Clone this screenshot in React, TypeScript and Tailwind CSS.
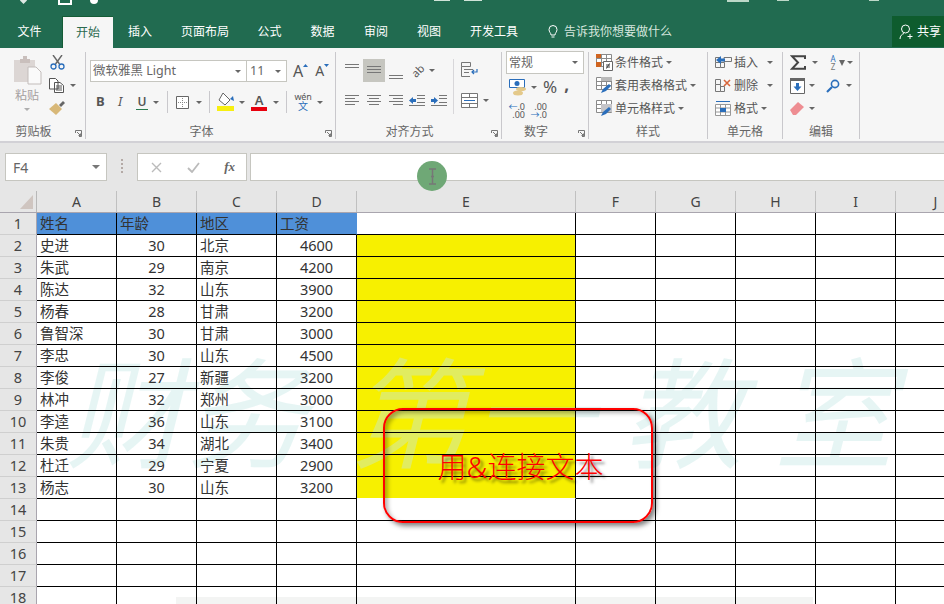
import { ReactNode } from "react";

const rows = [
  ["史进", "30", "北京", "4600"],
  ["朱武", "29", "南京", "4200"],
  ["陈达", "32", "山东", "3900"],
  ["杨春", "28", "甘肃", "3200"],
  ["鲁智深", "30", "甘肃", "3000"],
  ["李忠", "30", "山东", "4500"],
  ["李俊", "27", "新疆", "3200"],
  ["林冲", "32", "郑州", "3000"],
  ["李逵", "36", "山东", "3100"],
  ["朱贵", "34", "湖北", "3400"],
  ["杜迁", "29", "宁夏", "2900"],
  ["杨志", "30", "山东", "3200"],
];

const tabs = [
  { label: "插入", w: "w-[54px]" },
  { label: "页面布局", w: "w-[76px]" },
  { label: "公式", w: "w-[53px]" },
  { label: "数据", w: "w-[53px]" },
  { label: "审阅", w: "w-[54px]" },
  { label: "视图", w: "w-[52px]" },
  { label: "开发工具", w: "w-[78px]" },
];

const columns = [
  { label: "A", w: "w-[80px]" },
  { label: "B", w: "w-[80px]" },
  { label: "C", w: "w-[80px]" },
  { label: "D", w: "w-[80px]" },
  { label: "E", w: "w-[219px]" },
  { label: "F", w: "w-[80px]" },
  { label: "G", w: "w-[80px]" },
  { label: "H", w: "w-[80px]" },
  { label: "I", w: "w-[80px]" },
  { label: "J", w: "w-[80px]" },
];

const watermark = [
  { ch: "财", ml: "ml-0" },
  { ch: "务", ml: "ml-[0px]" },
  { ch: "第", ml: "ml-[43px]" },
  { ch: "一", ml: "ml-[4px]" },
  { ch: "教", ml: "ml-[30px]" },
  { ch: "室", ml: "ml-[31px]" },
];

const sheetCols = "grid-cols-[37px_80px_80px_80px_80px_219px_80px_80px_80px_80px_80px]";

function Caret({ className = "" }: { className?: string }) {
  return <span className={`inline-block h-0 w-0 border-x-[3px] border-t-[3px] border-x-transparent border-t-[#666] ${className}`} />;
}

function Launcher() {
  return (
    <svg width="7" height="7" viewBox="0 0 7 7" className="shrink-0">
      <path d="M.5 3V.5H6.5V6.5H4M2 2L5.5 5.5M5.5 3.5V5.5H3.5" fill="none" stroke="#777" />
    </svg>
  );
}

function Group({ w, label, launcher, children }: { w: string; label: string; launcher?: boolean; children: ReactNode }) {
  return (
    <div className={`relative my-1 flex h-[87px] flex-col border-r border-[#c9c8cc] ${w}`}>
      <div className="h-[72px]">{children}</div>
      <div className={`text-center text-[12px] leading-[15px] text-[#666] ${launcher ? "pr-[18px]" : ""}`}>{label}</div>
      {launcher && (
        <div className="absolute right-[3px] bottom-[2px] flex">
          <Launcher />
        </div>
      )}
    </div>
  );
}

function Lines({ d }: { d: string }) {
  return (
    <svg width="16" height="16" viewBox="0 0 16 16">
      <path d={d} fill="none" stroke="#777" />
    </svg>
  );
}

function CellIcon({ kind }: { kind: "cond" | "table" | "style" }) {
  return (
    <svg width="17" height="17" viewBox="0 0 17 17">
      <path d="M.5.5H15.5V12.5H.5ZM.5 4.5H15.5M.5 8.5H15.5M5.5.5V12.5M10.5.5V12.5" fill="#fff" stroke="#8a8a8a" />
      {kind === "cond" && <path d="M0 0H5V4H0Z M0 8H5V13H0Z" fill="#d0641f" />}
      {kind === "cond" && <path d="M7.5 7.5H16.5V16.5H7.5Z" fill="#fff" stroke="#666" />}
      {kind === "cond" && <path d="M10 11H14M10 13H14M13.5 9.5L10.5 14.5" stroke="#444" fill="none" />}
      {kind === "table" && <path d="M5 0H16V4H5Z" fill="#b9b9b9" />}
      {kind === "style" && <path d="M5 4H16V12H5Z" fill="#c4c4c8" />}
      {kind !== "cond" && <path d="M5 16L7 12L13 7L15 9L10 14Z" fill="#2a6ebb" />}
    </svg>
  );
}

function StyleRow({ kind, label }: { kind: "cond" | "table" | "style"; label: string }) {
  return (
    <div className="flex h-[23px] items-center">
      <CellIcon kind={kind} />
      <span className="ml-[2px] text-[12px] text-[#555]">{label}</span>
      <Caret className="ml-[3px]" />
    </div>
  );
}

function CellsRow({ icon, label, caret }: { icon: ReactNode; label: string; caret: string }) {
  return (
    <div className="flex h-[23px] items-center">
      {icon}
      <span className="ml-[2px] text-[12px] text-[#555]">{label}</span>
      <Caret className={caret} />
    </div>
  );
}

function Ribbon() {
  return (
    <div className="flex h-[95px] border-b-2 border-[#d2d1d6] bg-[#f6f6f6]">
      <Group w="w-[86px]" label="剪贴板" launcher>
        <div className="flex pt-[3px] pl-[13px]">
          <div className="flex w-[28px] flex-col items-center">
            <svg width="29" height="30" viewBox="0 0 29 30">
              <path d="M1 5H22V27H1Z" fill="#dcd6d4" />
              <path d="M7 4H10V1H14V4H17V8H7Z" fill="#c9bfbc" />
              <path d="M15 12H23L28 17V29H15Z" fill="#fafafa" stroke="#c2bcba" />
            </svg>
            <span className="mt-[3px] text-[12px] leading-[15px] text-[#a5a0a0]">粘贴</span>
            <Caret className="mt-[5px] opacity-50" />
          </div>
          <div className="ml-2 flex flex-col gap-[8px]">
            <svg width="15" height="15" viewBox="0 0 15 15" className="ml-[1px]">
              <path d="M3 0L9.5 9M12 0L5.5 9" fill="none" stroke="#666" strokeWidth="1.4" />
              <circle cx="3.5" cy="11.5" r="2.5" fill="none" stroke="#2a6ebb" strokeWidth="1.3" />
              <circle cx="11.5" cy="11.5" r="2.5" fill="none" stroke="#2a6ebb" strokeWidth="1.3" />
            </svg>
            <div className="flex items-center">
              <svg width="15" height="15" viewBox="0 0 15 15">
                <path d="M.5.5H6.5L9 3V11H.5ZM5.5 4.5H11L14.5 7.5V14.5H5.5ZM7 8H13M7 10H13M7 12H13" fill="#fff" stroke="#555" />
              </svg>
              <Caret className="ml-[6px]" />
            </div>
            <svg width="16" height="14" viewBox="0 0 16 14">
              <path d="M10 4L14 0L16 2L12 6Z" fill="#666" />
              <path d="M0 8L7 2L13 8L7 14Z" fill="#d8b878" />
            </svg>
          </div>
        </div>
      </Group>

      <Group w="w-[250px]" label="字体" launcher>
        <div className="mt-2 flex h-[22px] items-center pl-1">
          <div className="flex h-[22px] w-[157px] items-center justify-between border border-[#c6c6c0] bg-white pr-[5px] pl-[2px]">
            <span className="text-[12.5px] text-[#666]">微软雅黑 Light</span>
            <Caret />
          </div>
          <div className="flex h-[22px] w-[40px] items-center justify-between border border-l-0 border-[#c6c6c0] bg-white pr-[5px] pl-[3px]">
            <span className="text-[12.5px] text-[#666]">11</span>
            <Caret />
          </div>
          <span className="ml-[6px] text-[16px] leading-[14px] text-[#555]">A</span>
          <svg width="5" height="3" viewBox="0 0 5 3" className="mb-[12px]"><path d="M0 3L2.5 0L5 3Z" fill="#2a6ebb" /></svg>
          <span className="ml-[7px] text-[14px] leading-[14px] text-[#555]">A</span>
          <svg width="5" height="3" viewBox="0 0 5 3" className="mb-[12px]"><path d="M0 0L2.5 3L5 0Z" fill="#2a6ebb" /></svg>
        </div>
        <div className="mt-2 flex h-[24px] items-center pl-[10px] text-[#555]">
          <span className="w-[10px] text-[13px] font-bold">B</span>
          <span className="ml-[12px] w-[10px] text-[13px] italic">I</span>
          <span className="ml-[8px] w-[12px] border-b border-[#2a7a50] text-center text-[12px] leading-[14px] font-semibold">U</span>
          <Caret className="ml-[5px]" />
          <span className="ml-[8px] h-[22px] w-px bg-[#c9c8cc]" />
          <svg width="13" height="13" viewBox="0 0 13 13" className="ml-[8px]">
            <path d="M.5.5H12.5V12.5H.5Z" fill="#fff" stroke="#666" />
            <path d="M6.5 2V11M2 6.5H11" stroke="#888" strokeDasharray="1 1" />
          </svg>
          <Caret className="ml-[7px]" />
          <span className="ml-[7px] h-[22px] w-px bg-[#c9c8cc]" />
          <svg width="19" height="20" viewBox="0 0 19 20" className="ml-[6px]">
            <path d="M7 1L14 8L9 13L3 8Z" fill="#fff" stroke="#666" />
            <path d="M14 7L17 4L18 9Z" fill="#2a6ebb" />
            <path d="M1 14H18V19H1Z" fill="#f7ef10" />
          </svg>
          <Caret className="ml-[4px]" />
          <div className="ml-[6px] flex w-[16px] flex-col items-center">
            <span className="text-[13px] leading-[13px] font-semibold">A</span>
            <span className="h-[4px] w-[16px] bg-[#e8000d]" />
          </div>
          <Caret className="ml-[6px]" />
          <span className="ml-[7px] h-[22px] w-px bg-[#c9c8cc]" />
          <div className="ml-[8px] flex w-[16px] flex-col items-center">
            <span className="text-[9px] leading-[9px] tracking-tight">wén</span>
            <span className="text-[10px] leading-[11px] text-[#2a6ebb]">文</span>
          </div>
          <Caret className="ml-[6px]" />
        </div>
      </Group>

      <Group w="w-[166px]" label="对齐方式" launcher>
        <div className="flex pt-[5px] pl-[5px]">
          <div>
            <div className="flex h-[26px] items-center">
              <div className="flex h-[23px] w-[22px] items-start justify-center pt-[3px]">
                <Lines d="M1 2.5H15M1 5.5H15" />
              </div>
              <div className="flex h-[23px] w-[22px] items-center justify-center bg-[#c6c6c0]">
                <Lines d="M1 4.5H15M1 7.5H15M1 10.5H15" />
              </div>
              <div className="flex h-[23px] w-[22px] items-end justify-center">
                <Lines d="M1 9.5H15M1 12.5H15" />
              </div>
              <div className="ml-[2px] flex w-[17px] items-center justify-center">
                <span className="-rotate-45 text-[11px] leading-[11px] text-[#555]">ab</span>
              </div>
              <Caret className="ml-[3px]" />
            </div>
            <div className="mt-[9px] flex h-[16px] items-center">
              <div className="flex w-[22px] justify-center"><Lines d="M1 3.5H15M1 6.5H11M1 9.5H15M1 12.5H11" /></div>
              <div className="flex w-[22px] justify-center"><Lines d="M1 3.5H15M3 6.5H13M1 9.5H15M3 12.5H13" /></div>
              <div className="flex w-[22px] justify-center"><Lines d="M1 3.5H15M5 6.5H15M1 9.5H15M5 12.5H15" /></div>
              <svg width="17" height="13" viewBox="0 0 17 13" className="ml-[2px]">
                <path d="M8 1.5H16M8 4.5H16M8 8.5H16M0 11.5H16" fill="none" stroke="#777" />
                <path d="M0 6.5L4 3V5H7V8H4V10Z" fill="#2a6ebb" />
              </svg>
              <svg width="17" height="13" viewBox="0 0 17 13" className="ml-[5px]">
                <path d="M8 1.5H16M8 4.5H16M8 8.5H16M0 11.5H16" fill="none" stroke="#777" />
                <path d="M7 6.5L3 3V5H0V8H3V10Z" fill="#2a6ebb" />
              </svg>
            </div>
          </div>
          <span className="mt-[2px] ml-[5px] h-[55px] w-px bg-[#d8d7da]" />
          <div className="ml-[7px] flex flex-col gap-[16px] pt-[5px]">
            <svg width="17" height="15" viewBox="0 0 17 15">
              <path d="M.5.5H9.5V4.5H.5ZM.5 4.5V14.5H9M3 7.5H12M3 10.5H8" fill="none" stroke="#777" />
              <path d="M16 7V10H11M13 8L11 10L13 12" fill="none" stroke="#2a6ebb" strokeWidth="1.2" />
            </svg>
            <div className="flex items-center">
              <svg width="17" height="15" viewBox="0 0 17 15">
                <path d="M.5.5H16.5V14.5H.5ZM.5 4.5H16.5M.5 10.5H16.5M8.5.5V4.5M8.5 10.5V14.5" fill="#fff" stroke="#777" />
                <path d="M3 7.5H14" stroke="#2a6ebb" />
              </svg>
              <Caret className="ml-[5px]" />
            </div>
          </div>
        </div>
      </Group>

      <Group w="w-[87px]" label="数字" launcher>
        <div className="mt-[-1px] ml-[4px] flex h-[23px] w-[78px] items-center justify-between border border-[#c6c6c0] bg-white pr-[5px] pl-[2px]">
          <span className="text-[12px] text-[#666]">常规</span>
          <Caret />
        </div>
        <div className="mt-[3px] flex h-[20px] items-center pl-[7px]">
          <svg width="18" height="17" viewBox="0 0 18 17">
            <path d="M.5.5H15.5V8.5H.5Z" fill="#fff" stroke="#2a6ebb" />
            <circle cx="8" cy="4.5" r="2.5" fill="#2a6ebb" />
            <ellipse cx="12" cy="10" rx="5" ry="2" fill="#e4c98a" />
            <ellipse cx="9" cy="14" rx="5" ry="2.5" fill="#e4c98a" />
          </svg>
          <Caret className="ml-[4px]" />
          <span className="ml-[6px] text-[17px] leading-[16px] text-[#555]">%</span>
          <span className="mb-[4px] ml-[7px] text-[17px] leading-[16px] font-bold text-[#555]">,</span>
        </div>
        <div className="mt-[6px] flex items-center pl-[7px]">
          <div className="flex w-[16px] flex-col items-end text-[9px] leading-[8px] text-[#555]">
            <span className="flex items-center"><span className="text-[#2a6ebb]">←</span>.0</span>
            <span>.00</span>
          </div>
          <div className="ml-[6px] flex w-[16px] flex-col items-end text-[9px] leading-[8px] text-[#555]">
            <span>.00</span>
            <span className="flex items-center"><span className="text-[#2a6ebb]">→</span>.0</span>
          </div>
        </div>
      </Group>

      <Group w="w-[119px]" label="样式">
        <div className="-mt-px pl-[7px]">
          <StyleRow kind="cond" label="条件格式" />
          <StyleRow kind="table" label="套用表格格式" />
          <StyleRow kind="style" label="单元格样式" />
        </div>
      </Group>

      <Group w="w-[75px]" label="单元格">
        <div className="-mt-px pl-[7px]">
          <CellsRow
            label="插入"
            caret="ml-[9px]"
            icon={
              <svg width="17" height="17" viewBox="0 0 17 17">
                <path d="M.5 3.5H5.5V8.5H.5ZM.5 8.5V13.5H5.5V8.5M5.5 13.5H9.5V8.5H5.5M9 3.5H16.5V7.5H9Z" fill="none" stroke="#777" />
                <path d="M1 6L6 2V4.5H10V7.5H6V10Z" fill="#2a6ebb" />
              </svg>
            }
          />
          <CellsRow
            label="删除"
            caret="ml-[9px]"
            icon={
              <svg width="17" height="17" viewBox="0 0 17 17">
                <path d="M.5 2.5H5.5V7.5H.5ZM.5 7.5V14.5H5.5V7.5M5.5 14.5H9.5V9.5H5.5" fill="none" stroke="#777" />
                <path d="M9 3L15 9M15 3L9 9" stroke="#d8653a" strokeWidth="1.6" />
              </svg>
            }
          />
          <CellsRow
            label="格式"
            caret="ml-[3px]"
            icon={
              <svg width="17" height="17" viewBox="0 0 17 17">
                <path d="M.5 4.5H15.5V15.5H.5ZM.5 8H15.5M.5 12H15.5M5.5 4.5V15.5M10.5 4.5V15.5" fill="#fff" stroke="#999" />
                <path d="M1 1.5H15" stroke="#2a6ebb" />
                <path d="M5 8H11V12H5Z" fill="#2a6ebb" />
              </svg>
            }
          />
        </div>
      </Group>

      <Group w="w-[77px]" label="编辑">
        <div className="-mt-px pl-[7px]">
          <div className="flex h-[23px] items-center">
            <svg width="16" height="15" viewBox="0 0 16 15">
              <path d="M15 4V1.2H2L8 7.5L2 13.8H15V11" fill="none" stroke="#444" strokeWidth="2" />
            </svg>
            <Caret className="ml-[6px]" />
            <span className="ml-[9px] flex w-[12px] flex-col items-center text-[8px] leading-[8px] text-[#2a6ebb]">
              <span>A</span>
              <span className="text-[#777]">Z</span>
            </span>
            <span className="h-0 w-0 border-x-[3px] border-t-[6px] border-x-transparent border-t-[#666]" />
            <Caret className="ml-[2px]" />
          </div>
          <div className="flex h-[23px] items-center">
            <svg width="15" height="16" viewBox="0 0 15 16">
              <path d="M.5.5H14.5V15.5H.5Z" fill="#fff" stroke="#666" />
              <path d="M0 0H15V3H0Z" fill="#666" />
              <path d="M7.5 13L3.5 8.5H6V5H9V8.5H11.5Z" fill="#2a6ebb" />
            </svg>
            <Caret className="ml-[4px]" />
            <svg width="14" height="14" viewBox="0 0 14 14" className="ml-[11px]">
              <circle cx="9" cy="5" r="3.6" fill="none" stroke="#2a6ebb" strokeWidth="1.6" />
              <path d="M6 8L1 13" stroke="#2a6ebb" strokeWidth="2.2" />
            </svg>
            <Caret className="ml-[6px]" />
          </div>
          <div className="flex h-[23px] items-center">
            <svg width="14" height="13" viewBox="0 0 14 13">
              <path d="M0 8L8 0L14 5L6 13H3Z" fill="#ee8d92" />
            </svg>
            <Caret className="ml-[5px]" />
          </div>
        </div>
      </Group>
    </div>
  );
}

function FormulaBar() {
  return (
    <div className="flex h-[48px] bg-[#e6e6e6] pt-[10px] pl-[5px]">
      <div className="flex h-[28px] w-[102px] items-center justify-between border border-[#c6c6c0] bg-white pr-[6px] pl-[7px]">
        <span className="text-[14px] text-[#666]">F4</span>
        <span className="h-0 w-0 border-x-[4px] border-t-[4px] border-x-transparent border-t-[#777]" />
      </div>
      <div className="flex w-[30px] justify-center pt-[6px]">
        <span className="h-[14px] w-0 border-l-2 border-dotted border-[#b4aaa6]" />
      </div>
      <div className="flex h-[28px] w-[110px] items-center justify-between border border-[#c6c6c0] bg-white pr-[11px] pl-[13px]">
        <svg width="11" height="11" viewBox="0 0 11 11"><path d="M1 1L10 10M10 1L1 10" stroke="#bbb" strokeWidth="1.4" /></svg>
        <svg width="13" height="11" viewBox="0 0 13 11"><path d="M1 6L5 10L12 1" fill="none" stroke="#bbb" strokeWidth="1.8" /></svg>
        <span className="font-['Liberation_Serif',serif] text-[13px] font-bold text-[#666] italic">fx</span>
      </div>
      <div className="ml-[3px] h-[28px] flex-1 border-y border-l border-[#c6c6c0] bg-white" />
    </div>
  );
}

function Sheet() {
  return (
    <div className="relative bg-white">
      <div className={`absolute inset-0 grid ${sheetCols} auto-rows-[22px]`}>
        <div className="col-start-6 row-span-12 row-start-2 mb-px bg-[#f7f000]" />
      </div>
      <div className="absolute top-[384px] left-[176px] h-[8px] w-[637px] bg-[#f3f4f3]" />
      <div className="pointer-events-none absolute top-[130px] left-[66px] flex text-[120px] leading-[140px] text-[rgba(195,230,228,0.42)] italic">
        {watermark.map((m) => (
          <span key={m.ch} className={`w-[120px] shrink-0 text-center ${m.ml}`}>
            {m.ch}
          </span>
        ))}
      </div>
      <div className={`relative grid ${sheetCols} auto-rows-[22px] text-[14.5px] leading-[21px] text-[#333]`}>
        {Array.from({ length: 18 }, (_, i) => {
          const row = rows[i - 1];
          const head = i === 0;
          return (
            <div key={i} className="contents">
              <div className="border-r border-b border-r-[#a9a5ae] border-b-[#cfcfcf] bg-[#e6e6e6] text-center text-[#444]">{i + 1}</div>
              {head ? (
                <>
                  {["姓名", "年龄", "地区", "工资"].map((h, n) => (
                    <div key={h} className={`border-b border-black bg-[#4f90d9] pl-[3px] ${n < 3 ? "border-r" : "border-r border-r-[#4f90d9]"}`}>
                      {h}
                    </div>
                  ))}
                </>
              ) : (
                [0, 1, 2, 3].map((n) => (
                  <div key={n} className={`border-r border-b border-black ${n % 2 ? "text-center" : "pl-[3px]"}`}>
                    {row ? row[n] : ""}
                  </div>
                ))
              )}
              {[4, 5, 6, 7, 8, 9].map((n) => (
                <div key={n} className={`border-r border-b border-black ${n === 4 && i === 12 ? "border-b-transparent" : ""}`} />
              ))}
            </div>
          );
        })}
      </div>
    </div>
  );
}

export default function App() {
  return (
    <div className="relative h-[604px] w-[944px] overflow-hidden bg-white font-['Noto_Sans','Noto_Sans_CJK_SC',sans-serif]">
      <div className="h-[48px] bg-[#216b50]">
        <div className="flex h-[16px] overflow-hidden">
          <span className="mt-[-2px] ml-[21px] h-[5px] w-[5px] rotate-45 bg-[#dfe9e4]" />
          <span className="ml-[32px] h-[5px] w-[14px] border-x-2 border-b-2 border-white" />
          <span className="ml-[18px] h-[4px] w-[8px] rounded-b-full bg-white" />
          <span className="ml-[336px] h-px w-[16px] bg-[#cfe3d8]" />
          <span className="ml-[14px] h-px w-[18px] bg-[#cfe3d8]" />
          <span className="ml-[245px] h-[2px] w-[22px] bg-[#bcd8c8]" />
          <span className="ml-[28px] h-px w-[12px] bg-[#bcd8c8]" />
          <span className="ml-[80px] h-px w-[10px] bg-[#bcd8c8]" />
        </div>
        <div className="flex h-[32px] text-[12px] text-white">
          <div className="flex w-[59px] items-center justify-center">文件</div>
          <div className="ml-[3px] flex w-[51px] items-center justify-center border-t border-l border-[#155c36] bg-[#f6f6f6] text-[#2b6a4f]">开始</div>
          {tabs.map((t) => (
            <div key={t.label} className={`flex items-center justify-center ${t.w}`}>
              {t.label}
            </div>
          ))}
          <div className="ml-[15px] flex items-center text-[#d6e6de]">
            <svg width="10" height="14" viewBox="0 0 10 14">
              <path d="M3 10C3 8 1 7 1 4.5A4 4 0 0 1 9 4.5C9 7 7 8 7 10ZM3.5 12H6.5" fill="none" stroke="#fff" />
            </svg>
            <span className="ml-[6px]">告诉我你想要做什么</span>
          </div>
          <div className="ml-auto flex h-[31px] w-[52px] items-center bg-[#0e5c2e] pl-[7px]">
            <svg width="15" height="16" viewBox="0 0 15 16">
              <circle cx="6.5" cy="5" r="4" fill="none" stroke="#fff" />
              <path d="M1 15C1 12 3 10 5 9.5M11 10V15M8.5 12.5H13.5" fill="none" stroke="#fff" />
            </svg>
            <span className="ml-[3px]">共享</span>
          </div>
        </div>
      </div>
      <Ribbon />
      <FormulaBar />
      <div className="flex h-[22px] border-b border-[#a9a5ae] bg-[#e6e6e6] text-[14px] text-[#444]">
        <div className="relative w-[37px] shrink-0 border-r border-[#b8b8b8]">
          <span className="absolute top-[4px] left-[20px] h-0 w-0 border-b-[14px] border-l-[13px] border-b-[#cfc5c0] border-l-transparent" />
        </div>
        {columns.map((c) => (
          <div key={c.label} className={`shrink-0 border-r border-[#c0c0c0] text-center leading-[21px] ${c.w}`}>
            {c.label}
          </div>
        ))}
      </div>
      <Sheet />

      {/* callout and the recording cursor lie over the sheet */}
      <div className="absolute top-[408px] left-[383px] flex h-[115px] w-[270px] items-center justify-center rounded-[20px] border-2 border-[#f00] shadow-[3px_3px_5px_rgba(0,0,0,0.5),inset_3px_3px_4px_rgba(0,0,0,0.3)]">
        <span className="mt-[2px] ml-[5px] text-[29px] font-light text-[#f00] [text-shadow:3px_3px_3px_rgba(0,0,0,0.5)]">用&amp;连接文本</span>
      </div>
      <div className="absolute top-[161px] left-[417px] flex h-[30px] w-[30px] items-center justify-center rounded-full bg-[#6fa876]">
        <svg width="9" height="17" viewBox="0 0 9 17">
          <path d="M1 1H8M4.5 1V16M1 16H8M3 8.5H6" fill="none" stroke="#777" strokeWidth="1.5" />
        </svg>
      </div>
    </div>
  );
}
